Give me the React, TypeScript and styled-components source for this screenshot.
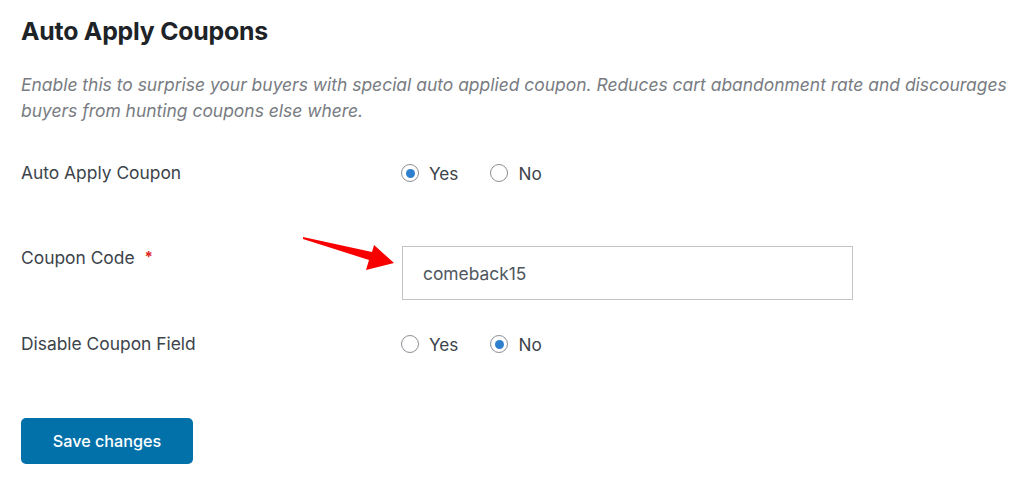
import React from 'react';
import styled, { createGlobalStyle } from 'styled-components';

const GlobalStyle = createGlobalStyle`
	html, body {
		margin: 0;
		padding: 0;
		background: #fff;
	}
	body {
		font-family: Inter, "Noto Sans", "Liberation Sans", sans-serif;
		color: #3c434a;
	}
`;

const Page = styled.div`
	width: 1024px;
	height: 489px;
	box-sizing: border-box;
	padding: 16px 0 0 21px;
	overflow: hidden;
`;

const Title = styled.h2`
	margin: 0;
	font-size: 24.8px;
	font-weight: 700;
	color: #1d2327;
	line-height: 30px;
	letter-spacing: -0.2px;
`;

const Description = styled.p`
	margin: 26px 0 0;
	font-size: 17.45px;
	line-height: 26px;
	font-style: italic;
	color: #787c82;
	width: 1003px;
`;

const Form = styled.div`
	display: flex;
	flex-direction: column;
	margin-top: 24px;
`;

const Row = styled.div<{ $top?: boolean; $pad?: string }>`
	display: grid;
	grid-template-columns: 381px 1fr;
	align-items: ${p => (p.$top ? 'start' : 'center')};
	min-height: 50px;
	padding: ${p => p.$pad || '0'};
`;

const Label = styled.div`
	font-size: 17.4px;
	line-height: 24px;
	color: #3c434a;
`;

const Required = styled.span`
	color: #e0261f;
	font-weight: 700;
	margin-left: 10px;
	font-size: 15px;
	position: relative;
	top: -2px;
`;

const RadioGroup = styled.div`
	display: flex;
	align-items: center;
	gap: 32px;
	margin-left: -1px;
`;

const RadioOption = styled.label`
	display: flex;
	align-items: center;
	gap: 10px;
	font-size: 17.2px;
	color: #3c434a;
`;

const RadioCircle = styled.span<{ $checked: boolean }>`
	width: 16px;
	height: 16px;
	border-radius: 50%;
	border: 1px solid #8c8f94;
	box-sizing: content-box;
	display: flex;
	align-items: center;
	justify-content: center;
	background: #fff;
	&::after {
		content: '';
		width: 9px;
		height: 9px;
		border-radius: 50%;
		background: #2f7fcf;
		display: ${p => (p.$checked ? 'block' : 'none')};
	}
`;

const InputCell = styled.div`
	position: relative;
`;

const TextInput = styled.div`
	width: 451px;
	height: 54px;
	box-sizing: border-box;
	border: 1px solid #c3c4c7;
	padding: 0 20px;
	display: flex;
	align-items: center;
	font-size: 17.4px;
	color: #50575e;
`;

const Arrow = styled.svg`
	position: absolute;
	left: -102px;
	top: -19px;
`;

const SaveButton = styled.button`
	margin-top: 49px;
	width: 172px;
	height: 46px;
	background: #0271aa;
	border: none;
	border-radius: 5px;
	color: #fff;
	font-family: inherit;
	font-size: 16.2px;
	font-weight: 500;
	cursor: pointer;
`;

const Radio = ({ label, checked }: { label: string; checked: boolean }) => (
	<RadioOption>
		<RadioCircle $checked={checked} />
		{label}
	</RadioOption>
);

const App = () => {
	return (
		<Page>
			<GlobalStyle />
			<Title>Auto Apply Coupons</Title>
			<Description>
				Enable this to surprise your buyers with special auto applied coupon. Reduces cart abandonment rate and discourages
				buyers from hunting coupons else where.
			</Description>
			<Form>
				<Row>
					<Label>Auto Apply Coupon</Label>
					<RadioGroup>
						<Radio label="Yes" checked />
						<Radio label="No" checked={false} />
					</RadioGroup>
				</Row>
				<Row $top $pad="48px 0 19px">
					<Label>
						Coupon Code<Required>*</Required>
					</Label>
					<InputCell>
						<Arrow width="100" height="50" viewBox="0 0 100 50">
							<path d="M3 10 L72 25 L74 18 L94 36 L66 43 L69 33 L3 12 Z" fill="#f80000" />
						</Arrow>
						<TextInput>comeback15</TextInput>
					</InputCell>
				</Row>
				<Row>
					<Label>Disable Coupon Field</Label>
					<RadioGroup>
						<Radio label="Yes" checked={false} />
						<Radio label="No" checked />
					</RadioGroup>
				</Row>
			</Form>
			<SaveButton>Save changes</SaveButton>
		</Page>
	);
};

export default App;
